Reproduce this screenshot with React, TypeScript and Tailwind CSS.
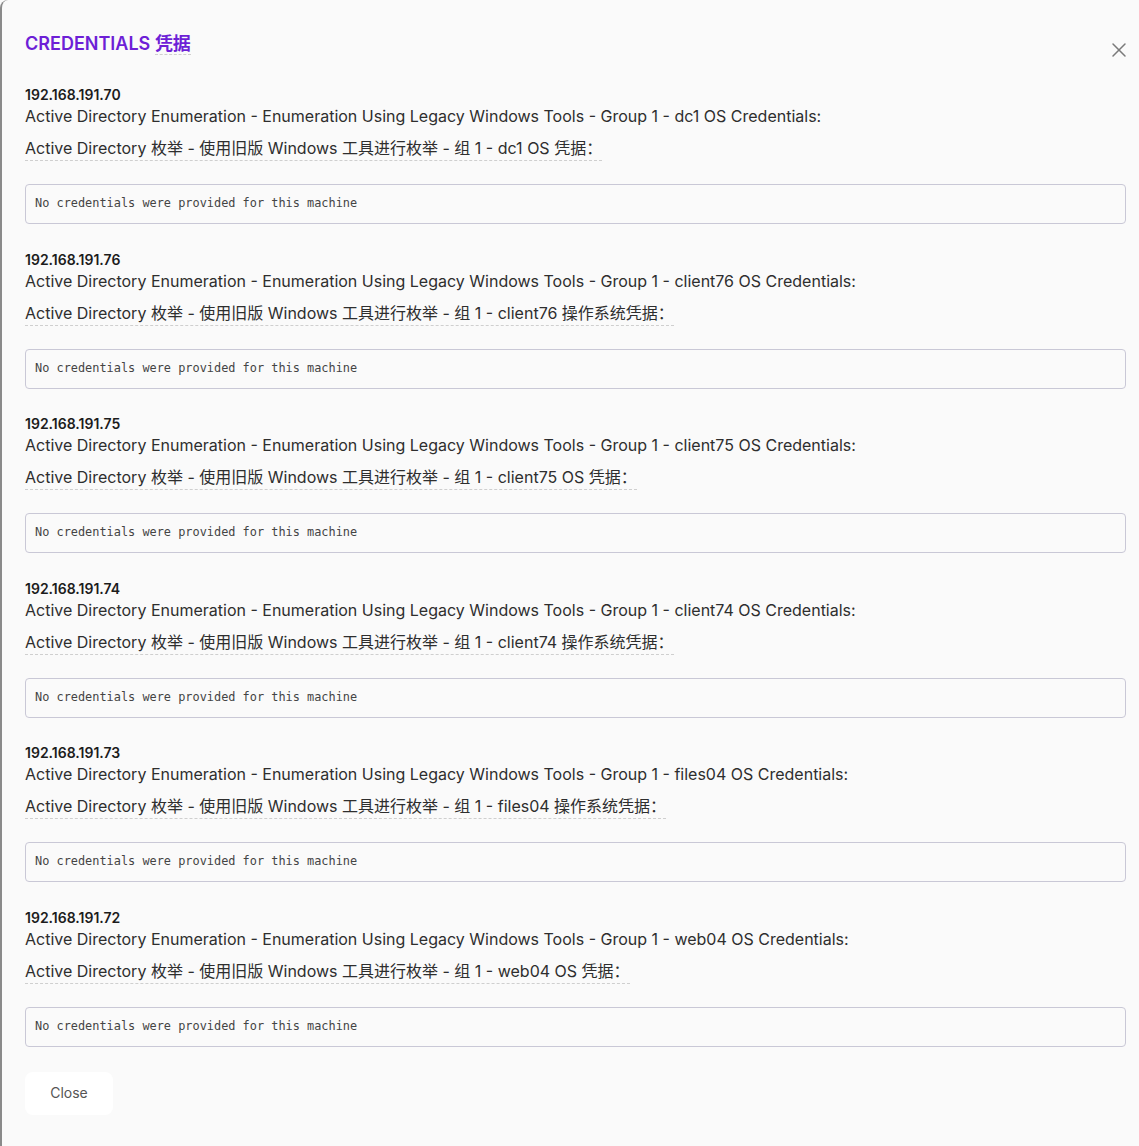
import { X } from "lucide-react";

const machines = [
  { ip: "192.168.191.70", host: "dc1", zh: "dc1 OS 凭据：" },
  { ip: "192.168.191.76", host: "client76", zh: "client76 操作系统凭据：" },
  { ip: "192.168.191.75", host: "client75", zh: "client75 OS 凭据：" },
  { ip: "192.168.191.74", host: "client74", zh: "client74 操作系统凭据：" },
  { ip: "192.168.191.73", host: "files04", zh: "files04 操作系统凭据：" },
  { ip: "192.168.191.72", host: "web04", zh: "web04 OS 凭据：" },
];

const font = { fontFamily: '"Inter", "Noto Sans CJK SC", sans-serif' };

const App = () => {
  return (
    <div className="min-h-screen bg-[#fafafa]" style={font}>
      <div className="relative min-h-[1146px] rounded-tl-lg border-l-2 border-[#8a8a8a] bg-[#fafafa] pl-[23px] pr-[13px] pt-[30px] pb-8">
        {/* Header */}
        <h2 className="text-lg font-semibold leading-7 text-[#6d1fd6]">
          CREDENTIALS{" "}
          <span className="border-b border-dashed border-[#cfcfcf]">凭据</span>
        </h2>
        <button className="absolute right-[8px] top-[38px] text-[#7a7a7a]">
          <X className="h-6 w-6" strokeWidth={1.5} />
        </button>

        {/* Machines */}
        <div className="mt-[27px] flex flex-col gap-[25.6px]">
          {machines.map((m) => (
            <div key={m.ip}>
              <div className="text-sm font-semibold leading-5 text-[#1c1c1c]">{m.ip}</div>
              <div className="-mt-px text-base leading-6 text-[#2e2e2e]">
                Active Directory Enumeration - Enumeration Using Legacy Windows Tools - Group 1 - {m.host} OS Credentials:
              </div>
              <div className="mt-[9px] flex">
                <span className="block border-b border-dashed border-[#cfcfcf] text-base leading-[23px] text-[#2e2e2e]">
                  Active Directory 枚举 - 使用旧版 Windows 工具进行枚举 - 组 1 - {m.zh}
                </span>
              </div>
              <div className="mt-[23px] flex h-10 items-center rounded border border-[#c9c8d6] px-[9px]">
                <span
                  className="text-[11.9px] text-[#444]"
                  style={{ fontFamily: '"DejaVu Sans Mono", monospace' }}
                >
                  No credentials were provided for this machine
                </span>
              </div>
            </div>
          ))}
        </div>

        {/* Footer */}
        <button className="mt-[25px] h-[43px] w-[88px] rounded-lg bg-white text-sm text-[#555]">
          Close
        </button>
      </div>
    </div>
  );
};

export default App;
